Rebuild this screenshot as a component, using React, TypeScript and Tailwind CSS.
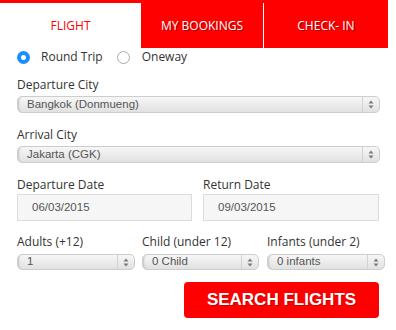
import React from "react";

function Arrows() {
  return (
    <svg width="6" height="9" viewBox="0 0 6 9">
      <path d="M3 0.5 L5.5 3.5 L0.5 3.5 Z" fill="#7a7a7a" />
      <path d="M3 8.5 L5.5 5.5 L0.5 5.5 Z" fill="#7a7a7a" />
    </svg>
  );
}

function Select({ value, w, h = "h-[17px]" }: { value: string; w: string; h?: string }) {
  return (
    <div
      className={`${w} ${h} flex items-stretch rounded-[5px] border border-[#cdcdcd] bg-linear-to-b from-[#f7f7f7] to-[#e1e1e1] shadow-[inset_3px_0_2px_-2px_#c4c4c4]`}
    >
      <span className="flex flex-1 items-center pl-[9px] font-['Liberation_Sans',Arial,sans-serif] text-[11.5px] text-[#555]">
        {value}
      </span>
      <div className="flex w-[17px] items-center justify-center border-l border-[#d2d2d2]">
        <Arrows />
      </div>
    </div>
  );
}

function Label({ children }: { children: React.ReactNode }) {
  return <div className="text-[12px] leading-[18px] text-[#333]">{children}</div>;
}

export default function App() {
  return (
    <div className="h-[330px] w-[396px] bg-white font-['Open_Sans',sans-serif]">
      <div className="flex h-[48px] w-[388px] border-t-[3px] border-[#ff0000] text-[12px]">
        <div className="flex w-[141px] items-center justify-center pt-px text-[#ff0000]">FLIGHT</div>
        <div className="flex w-[122px] items-center justify-center bg-[#ff0000] pt-px font-medium text-white [text-shadow:1px_1px_0_rgba(80,0,0,0.55)]">
          MY BOOKINGS
        </div>
        <div className="w-px bg-white" />
        <div className="flex flex-1 items-center justify-center bg-[#ff0000] pt-px font-medium text-white [text-shadow:1px_1px_0_rgba(80,0,0,0.55)]">
          CHECK- IN
        </div>
      </div>

      <div className="px-[17px]">
        <div className="flex h-[18px] items-center text-[12px] leading-[18px] text-[#333]">
          <span className="flex h-[13px] w-[13px] items-center justify-center rounded-full bg-[#1b8eff]">
            <span className="h-[5px] w-[5px] rounded-full bg-white" />
          </span>
          <span className="ml-[11px]">Round Trip</span>
          <span className="ml-[14px] h-[13px] w-[13px] rounded-full border border-[#a9a9a9] bg-white" />
          <span className="ml-[12px]">Oneway</span>
        </div>

        <div className="mt-[10px]">
          <Label>Departure City</Label>
        </div>
        <div className="mt-[2px]">
          <Select value="Bangkok (Donmueng)" w="w-[363px]" />
        </div>

        <div className="mt-[13px]">
          <Label>Arrival City</Label>
        </div>
        <div className="mt-[2px]">
          <Select value="Jakarta (CGK)" w="w-[363px]" />
        </div>

        <div className="mt-[13px] flex">
          <div className="w-[177px]">
            <Label>Departure Date</Label>
            <div className="flex h-[27px] items-center border border-[#dcdcdc] bg-[#f6f6f6] pl-[14px] font-['Liberation_Sans',Arial,sans-serif] text-[11.5px] text-[#555]">
              06/03/2015
            </div>
          </div>
          <div className="ml-[11px] w-[178px]">
            <Label>Return Date</Label>
            <div className="flex h-[27px] items-center border border-[#dcdcdc] bg-[#f6f6f6] pl-[14px] font-['Liberation_Sans',Arial,sans-serif] text-[11.5px] text-[#555]">
              09/03/2015
            </div>
          </div>
        </div>

        <div className="mt-[12px] flex">
          <div className="w-[118px]">
            <Label>Adults (+12)</Label>
            <div className="mt-[3px]">
              <Select value="1" w="w-[118px]" h="h-[16px]" />
            </div>
          </div>
          <div className="ml-[7px] w-[117px]">
            <Label>Child (under 12)</Label>
            <div className="mt-[3px]">
              <Select value="0 Child" w="w-[117px]" h="h-[16px]" />
            </div>
          </div>
          <div className="ml-[8px] w-[118px]">
            <Label>Infants (under 2)</Label>
            <div className="mt-[3px]">
              <Select value="0 infants" w="w-[118px]" h="h-[16px]" />
            </div>
          </div>
        </div>

        <div className="mt-[12px] flex">
          <button className="ml-[167px] flex h-[36px] w-[205px] items-center justify-center rounded-[4px] bg-[#ff0000] font-['Liberation_Sans',Arial,sans-serif] text-[17px] font-bold text-white [text-shadow:1px_1px_0_rgba(80,0,0,0.3)]">
            SEARCH FLIGHTS
          </button>
        </div>
      </div>
    </div>
  );
}
